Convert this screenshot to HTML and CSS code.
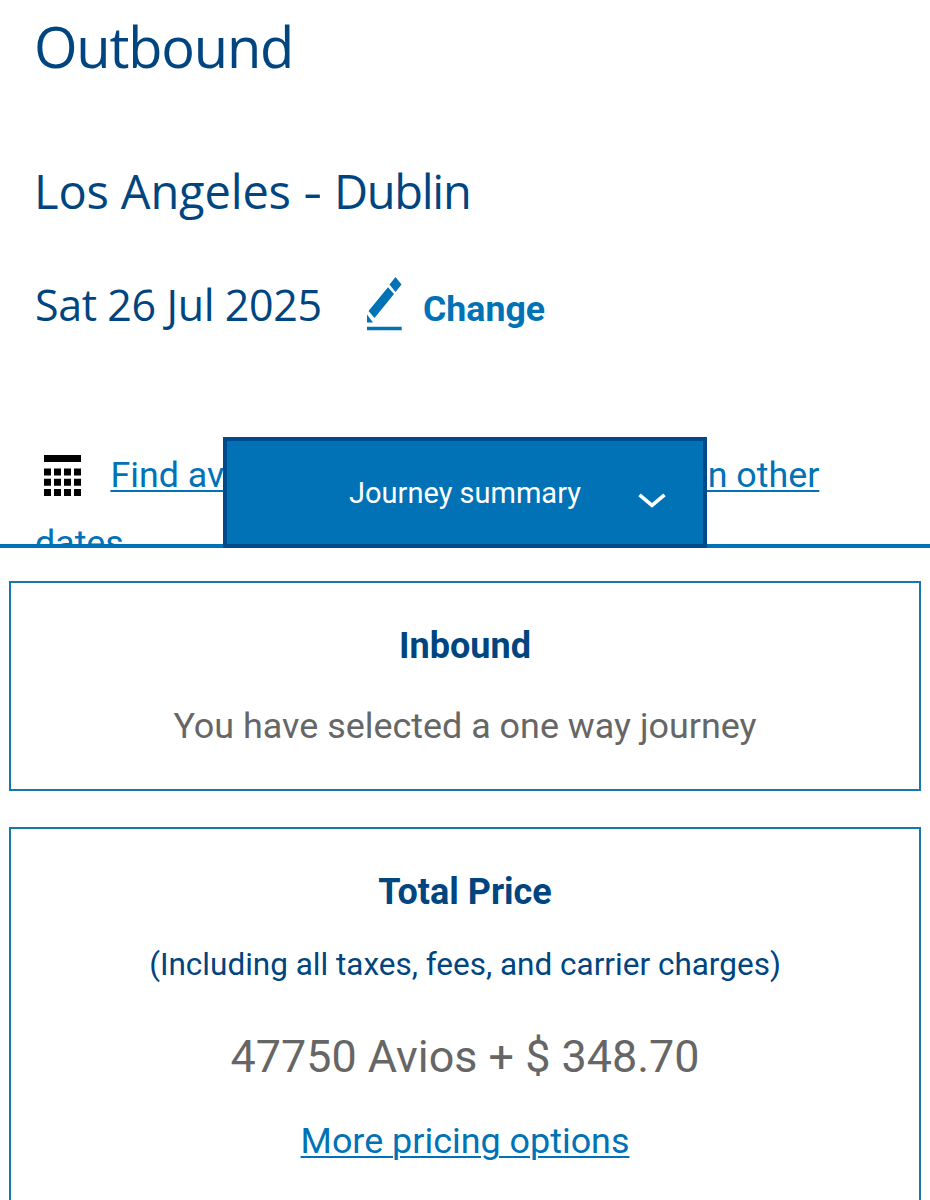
FILE: index.html
```html
<!DOCTYPE html>
<html lang="en">
<head>
<meta charset="utf-8">
<title>Outbound</title>
<link rel="stylesheet" href="styles.css">
</head>
<body>
<main class="flight">
  <h1 class="title"><span>Outbound</span></h1>
  <h2 class="route">Los Angeles <span class="dash">-</span> <span class="city">Dublin</span></h2>
  <div class="date-row">
    <span class="date">Sat 26 Jul 2025</span>
    <a class="change">
      <svg class="pencil" width="36" height="54" viewBox="0 0 36 54"><path d="M28.5 0 34.500 7.500 28.500 15 22.500 7.500ZM21 10.200 27 17 7.500 41 1.500 34ZM0 37.500 6 45.500H0ZM0 49.800H34.700V53.300H0Z" fill="#0072b5"/></svg>
      <span>Change</span>
    </a>
  </div>
  <div class="find">
    <svg class="calendar" width="37" height="41" viewBox="0 0 37 41"><path d="M0 0H37V7H0ZM0 13.5h7v7H0zm10 0h7v7h-7zm10 0h7v7h-7zm10 0h7v7h-7zM0 23.7h7v7H0zm10 0h7v7h-7zm10 0h7v7h-7zm10 0h7v7h-7zM0 34h7v7H0zm10 0h7v7h-7zm10 0h7v7h-7zm10 0h7v7h-7z"/></svg>
    <a class="link">Find availability for this journey type on other<br>dates</a>
  </div>
</main>
<section class="summary">
  <button class="tab"><span>Journey summary</span>
    <svg class="chevron" width="28" height="15" viewBox="0 0 28 15"><path d="M1.5 1.8 14 12.3 26.5 1.8" fill="none" stroke="#fff" stroke-width="3.6"/></svg>
  </button>
  <div class="card inbound">
    <h3>Inbound</h3>
    <p class="note">You have selected a one way journey</p>
  </div>
  <div class="card price">
    <h3>Total Price</h3>
    <p class="taxes">(Including all taxes, fees, and carrier charges)</p>
    <p class="amount">47750 Avios + $ 348.70</p>
    <a class="link options">More pricing options</a>
  </div>
</section>
</body>
</html>
```
FILE: styles.css
```css
* { box-sizing: border-box; }
body { margin: 0; height: 1200px; overflow: hidden; background: #fff; font-family: Roboto, sans-serif; }
h1, h2, h3, p { margin: 0; }
.flight { height: 544px; overflow: hidden; padding: 6px 35px 0; color: #00457f; }
.title, .route, .date { font-family: "Open Sans", sans-serif; font-weight: 400; white-space: nowrap; }
.title { font-size: 56px; line-height: 80px; letter-spacing: -1.2px; margin-left: -1px; }
.route { font-size: 47px; line-height: 70px; margin-top: 70px; margin-left: -1px; letter-spacing: -.15px; }
.dash { display: inline-block; transform: scaleX(1.25); margin: 0 2px; }
.city { letter-spacing: -1.3px; }
.date-row { display: flex; height: 70px; margin-top: 44px; align-items: center; }
.date { font-size: 43px; line-height: 70px; width: 332px; letter-spacing: -.4px; }
.change { display: flex; gap: 20px; color: #0072b5; font-size: 35.7px; font-weight: 700; line-height: 54px; padding-top: 3px; }
.change span { padding-top: 5px; }
.find { padding-top: 101px; line-height: 68px; font-size: 35.8px; white-space: nowrap; }
.calendar { display: inline-block; margin: 0 20.500px 0 9px; vertical-align: -9px; }
.link { color: #0072b5; text-decoration: underline; text-decoration-thickness: 2px; text-underline-offset: 3px; }
.summary { position: relative; height: 656px; border-top: 4px solid #0072b5; padding: 33px 9px 0; background: #fff; }
.tab { position: absolute; left: 223px; top: -111px; width: 484px; height: 111px; border: 4px solid #00498b; background: #0072b5; color: #fff; font: 29px Roboto, sans-serif; padding: 0; }
.chevron { position: absolute; left: 411px; top: 52px; }
.card { border: 2px solid #1878ae; text-align: center; display: flex; flex-direction: column; align-items: center; white-space: nowrap; }
.inbound { height: 210px; padding-top: 42px; }
.price { height: 410px; margin-top: 36px; padding-top: 42px; }
.card h3 { color: #00457f; font-size: 36px; line-height: 42px; }
.note { color: #666; font-size: 35.9px; line-height: 42px; margin-top: 38px; }
.taxes { color: #00457f; font-size: 31.5px; line-height: 40px; margin-top: 32px; }
.amount { color: #666; font-size: 44.9px; line-height: 52px; margin-top: 46px; }
.options { font-size: 35.9px; line-height: 42px; margin-top: 37px; }
```
